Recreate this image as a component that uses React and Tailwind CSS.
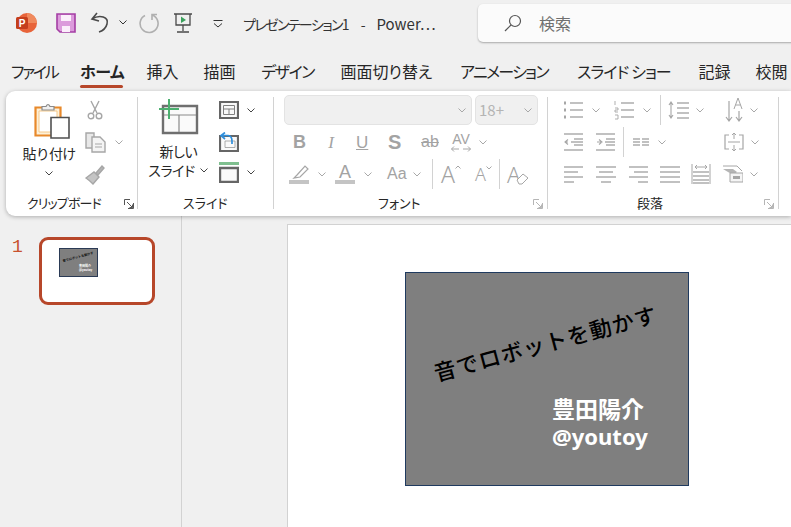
import React from 'react';

const tabs = [
    { label: 'ファイル', cls: 'ml-[11px] w-[46px] tracking-[-2.2px]' },
    { label: 'ホーム', cls: 'ml-[23px] w-[43px] font-bold tracking-[-0.5px]', active: true },
    { label: '挿入', cls: 'ml-[23px] w-[33px]' },
    { label: '描画', cls: 'ml-[24px] w-[33px]' },
    { label: 'デザイン', cls: 'ml-[25px] w-[53px] tracking-[-1.5px]' },
    { label: '画面切り替え', cls: 'ml-[26px] w-[93px]' },
    { label: 'アニメーション', cls: 'ml-[27px] w-[88px] tracking-[-1.7px]' },
    { label: 'スライド ショー', cls: 'ml-[29px] w-[92px] tracking-[-0.9px]' },
    { label: '記録', cls: 'ml-[29px] w-[33px]' },
    { label: '校閲', cls: 'ml-[24px] w-[33px]' },
];

// small chevron used all over the ribbon
const Chev = ({ className = '', color = '#a8a8a8' }) => (
    <svg width="8" height="5" viewBox="0 0 8 5" className={`shrink-0 ${className}`} fill="none" stroke={color} strokeWidth="1">
        <path d="M0.5 0.5 L4 4 L7.5 0.5" />
    </svg>
);

const Launcher = ({ color = '#b5b5b5', className = '' }) => (
    <svg width="10" height="10" viewBox="0 0 10 10" className={className} fill="none" stroke={color} strokeWidth="1">
        <path d="M9.5 4 V9.5 H4 M0.5 6 V0.5 H6 M3 3 L8.5 8.5 M8.5 5.5 V8.5 H5.5" />
    </svg>
);

const Icon = ({ w = 20, h = 20, className = '', children, stroke = '#a6a6a6' }) => (
    <svg width={w} height={h} viewBox={`0 0 ${w} ${h}`} className={`shrink-0 ${className}`} fill="none" stroke={stroke} strokeWidth="1.4">
        {children}
    </svg>
);

const Lines = ({ rows, x1 = 0, x2 = 20 }) => rows.map((y, i) => <path key={i} d={`M${Array.isArray(x1) ? x1[i] : x1} ${y} H${Array.isArray(x2) ? x2[i] : x2}`} />);

const Sep = ({ className = '' }) => <div className={`w-px bg-[#d2d2d2] shrink-0 ${className}`}></div>;

const GroupLabel = ({ children, className = '' }) => (
    <div className={`absolute bottom-[4px] text-[13px] leading-[18px] text-[#262626] whitespace-nowrap ${className}`}>{children}</div>
);

const Clipboard = () => (
    <div className="relative w-[131px] h-full flex shrink-0">
        <div className="ml-[16px] w-[54px] flex flex-col items-center pt-[11px]">
            <svg width="36" height="37" viewBox="0 0 36 37" fill="none" className="ml-[6px]">
                <path d="M1.5 5.5 H26.5 V33.5 H1.5 Z" fill="#fdf0d8" stroke="#e8892b" strokeWidth="2.2" />
                <path d="M5 9 H23 V30 H5 Z" fill="#ffffff" stroke="#f6c98a" strokeWidth="1" />
                <path d="M8 8 V4.5 H12 Q14 0.5 16 4.5 H20 V8 Z" fill="#f0f0f0" stroke="#8a8a8a" strokeWidth="1.2" />
                <path d="M17 15.5 H35 V36 H17 Z" fill="#ffffff" stroke="#505050" strokeWidth="1.6" />
            </svg>
            <div className="mt-[5px] text-[14px] leading-[18px] text-[#262626] whitespace-nowrap tracking-[-0.7px]">貼り付け</div>
            <Chev color="#444" className="mt-[9px]" />
        </div>
        <div className="ml-[9px] flex flex-col pt-[9px]">
            <Icon w={20} h={21}>
                <path d="M6 1 L12 13 M14 1 L8 13" />
                <circle cx="6" cy="16" r="2.8" />
                <circle cx="14" cy="16" r="2.8" />
            </Icon>
            <div className="mt-[11px] flex items-center">
                <Icon w={21} h={21}>
                    <path d="M1 1 H9 V16 H1 Z" fill="#e8e8e8" />
                    <path d="M7 5 H15 L20 10 V20 H7 Z" fill="#f4f4f4" />
                    <path d="M10 12 H17 M10 15 H17" strokeWidth="1" />
                </Icon>
                <Chev className="ml-[9px]" />
            </div>
            <Icon w={20} h={20} className="mt-[12px]" stroke="#a6a6a6">
                <path d="M11 8 L17 1 L19 3 L13 10 Z" fill="#b5b5b5" />
                <path d="M1 13 L9 7 L14 12 L8 19 Q4 15 1 13 Z" fill="#c4c4c4" />
            </Icon>
        </div>
        <GroupLabel className="left-[21px] [font-feature-settings:'palt'] tracking-[-0.9px]">クリップボード</GroupLabel>
        <Launcher color="#555" className="absolute right-[3px] bottom-[7px]" />
    </div>
);

const SlidesGroup = () => (
    <div className="relative w-[135px] h-full flex shrink-0">
        <div className="w-[80px] flex flex-col items-center pt-[8px]">
            <svg width="40" height="36" viewBox="0 0 40 36" fill="none" className="ml-[1px]">
                <path d="M4 7 H38 V34 H4 Z" fill="#fafafa" stroke="#6f6f6f" strokeWidth="2.4" />
                <path d="M20 16 V33 M20 16 H37 M5 16 H20" stroke="#8a8a8a" strokeWidth="1.2" />
                <path d="M10 0 V20 M0 10 H20" stroke="#4cb070" strokeWidth="2" />
            </svg>
            <div className="mt-[7px] ml-[1px] text-[14px] leading-[19px] text-[#262626] [font-feature-settings:'palt'] tracking-[-0.4px]">新しい</div>
            <div className="flex items-center text-[14px] leading-[19px] text-[#262626] [font-feature-settings:'palt'] whitespace-nowrap tracking-[-0.4px]">
                スライド<Chev color="#444" className="ml-[5px]" />
            </div>
        </div>
        <div className="ml-[1px] flex flex-col pt-[9px]">
            <div className="flex items-center h-[20px]">
                <Icon w={20} h={18} stroke="#666">
                    <path d="M1 1 H19 V17 H1 Z" fill="#fafafa" strokeWidth="2.2" />
                    <path d="M4.5 4.5 H15.5 V13.5 H4.5 Z M4.5 8 H15.5 M10 8 V13.5" strokeWidth="1" stroke="#808080" />
                </Icon>
                <Chev color="#444" className="ml-[8px]" />
            </div>
            <div className="flex items-center h-[20px] mt-[12px]">
                <Icon w={20} h={20} stroke="#666">
                    <path d="M1 4 H19 V19 H1 Z" fill="#fafafa" strokeWidth="2.2" />
                    <path d="M6 9 H16 M6 9 V15.5 H16 V9" strokeWidth="0.8" stroke="#999" />
                    <path d="M6 7 L2 3.5 L6 0.5 M2 3.5 H9 Q13 4 13 9 V12" stroke="#2f8fdc" strokeWidth="1.7" />
                </Icon>
            </div>
            <div className="flex items-center h-[21px] mt-[10px]">
                <Icon w={20} h={21} stroke="#666">
                    <path d="M0 1.5 H20" stroke="#7fbf8f" strokeWidth="3" />
                    <path d="M1 6 H19 V20 H1 Z" fill="#fafafa" strokeWidth="2.4" />
                </Icon>
                <Chev color="#444" className="ml-[8px]" />
            </div>
        </div>
        <GroupLabel className="left-[45px] [font-feature-settings:'palt']">スライド</GroupLabel>
    </div>
);

const FontGroup = () => (
    <div className="relative w-[273px] h-full flex flex-col shrink-0 pl-[10px]">
        <div className="flex mt-[4px] gap-[3px]">
            <div className="w-[188px] h-[30px] bg-[#f0f0f0] border border-[#e3e3e3] rounded-[5px] flex items-center justify-end pr-[5px]">
                <Chev />
            </div>
            <div className="w-[63px] h-[30px] bg-[#f0f0f0] border border-[#e3e3e3] rounded-[5px] flex items-center justify-between pl-[3px] pr-[5px] text-[15px] text-[#b4b4b4]">
                18+<Chev />
            </div>
        </div>
        <div className="flex items-center h-[24px] mt-[5px] text-[#a3a3a3]">
            <span className="ml-[9px] w-[12px] text-center text-[18px] leading-none font-bold font-['Liberation_Sans',sans-serif]">B</span>
            <span className="ml-[20px] w-[12px] text-center text-[17px] leading-none italic font-['Liberation_Serif',serif]">I</span>
            <span className="ml-[19px] w-[12px] text-center text-[17px] leading-none underline font-['Liberation_Sans',sans-serif]">U</span>
            <span className="ml-[20px] w-[12px] text-center text-[20px] leading-none font-bold font-['Liberation_Sans',sans-serif]">S</span>
            <span className="ml-[19px] w-[22px] text-center text-[16px] leading-none line-through font-['Liberation_Sans',sans-serif]">ab</span>
            <div className="ml-[10px] w-[20px] flex flex-col items-center leading-none">
                <span className="text-[14px] leading-[13px] font-['Liberation_Sans',sans-serif]">AV</span>
                <svg width="20" height="6" viewBox="0 0 20 6" fill="none" stroke="#a6a6a6"><path d="M3 0.5 L0.5 3 L3 5.5 M0.5 3 H8 M17 0.5 L19.5 3 L17 5.5 M12 3 H19.5" /></svg>
            </div>
            <Chev className="ml-[8px]" />
        </div>
        <div className="flex items-center h-[26px] mt-[7px] text-[#a3a3a3]">
            <div className="w-[20px] ml-[5px] flex flex-col items-center">
                <svg width="20" height="16" viewBox="0 0 20 16" fill="none" stroke="#a6a6a6" strokeWidth="1.2"><path d="M8 11 L16 2 L19 5 L11 13 L5 14 Z" /></svg>
                <div className="w-[20px] h-[4px] bg-[#c4c4c4]"></div>
            </div>
            <Chev className="ml-[9px]" />
            <div className="w-[20px] ml-[9px] flex flex-col items-center">
                <span className="text-[18px] leading-[16px] font-['Liberation_Sans',sans-serif]">A</span>
                <div className="w-[20px] h-[4px] bg-[#c4c4c4]"></div>
            </div>
            <Chev className="ml-[9px]" />
            <span className="ml-[15px] w-[22px] text-[16px] leading-none font-['Liberation_Sans',sans-serif]">Aa</span>
            <Chev className="ml-[4px]" />
            <Sep className="ml-[11px] h-[30px]" />
            <span className="ml-[8px] w-[22px] flex items-start text-[23px] leading-none font-light font-['Noto_Sans',sans-serif]">A
                <svg width="6" height="4" viewBox="0 0 6 4" className="mt-[2px] shrink-0" fill="none" stroke="#a6a6a6"><path d="M0.5 3.5 L3 1 L5.5 3.5" /></svg>
            </span>
            <span className="ml-[12px] w-[20px] flex items-start text-[18px] leading-none font-light font-['Noto_Sans',sans-serif]">A
                <svg width="6" height="4" viewBox="0 0 6 4" className="mt-[1px] shrink-0" fill="none" stroke="#a6a6a6"><path d="M0.5 0.5 L3 3 L5.5 0.5" /></svg>
            </span>
            <Sep className="ml-[4px] h-[30px]" />
            <span className="relative ml-[7px] w-[22px] h-[22px] text-[22px] leading-[22px] font-light font-['Noto_Sans',sans-serif]">A
                <svg width="13" height="12" viewBox="0 0 13 12" className="absolute right-0 bottom-0" fill="#fff" stroke="#a6a6a6"><path d="M1 7 L7 1 L12 5 L6 11 H3 Z" /></svg>
            </span>
        </div>
        <GroupLabel className="left-[104px] [font-feature-settings:'palt']">フォント</GroupLabel>
        <Launcher className="absolute right-[4px] bottom-[7px]" />
    </div>
);

const ParagraphGroup = () => (
    <div className="relative w-[230px] h-full flex flex-col shrink-0">
        <div className="flex items-center h-[32px] mt-[3px]">
            <Icon className="ml-[15px]">
                <path d="M1 3 H3 M1 10 H3 M1 17 H3" strokeWidth="3" />
                <Lines rows={[3, 10, 17]} x1={7} />
            </Icon>
            <Chev className="ml-[9px]" />
            <Icon className="ml-[14px]">
                <path d="M1 1 V5 M1 8 H4 V10 H1 V12 H4 M1 15 H4 V19 H1" strokeWidth="0.9" />
                <Lines rows={[3, 10, 17]} x1={7} />
            </Icon>
            <Chev className="ml-[9px]" />
            <Sep className="ml-[9px] h-[30px]" />
            <Icon w={22} className="ml-[7px]">
                <path d="M3 3 V17 M1 5 L3 2 L5 5 M1 15 L3 18 L5 15" strokeWidth="1.1" />
                <Lines rows={[3, 8, 13, 18]} x1={9} x2={21} />
            </Icon>
            <Chev className="ml-[6px]" />
            <Icon h={26} className="ml-[21px]">
                <path d="M4 4 V24 M1 20 L4 24 L7 20 M14 14 V24 M11 20 L14 24 L17 20" strokeWidth="1.2" />
                <path d="M9 12 L13 1 L17 12 M10.5 8 H15.5" strokeWidth="1" />
            </Icon>
            <Chev className="ml-[5px]" />
        </div>
        <div className="flex items-center h-[30px] mt-[1px]">
            <Icon className="ml-[16px]">
                <path d="M4 10 L1 10 M4 7.5 L1 10 L4 12.5" strokeWidth="1.1" />
                <Lines rows={[2, 7, 10, 13, 18]} x1={[0, 10, 7, 10, 0]} x2={19} />
            </Icon>
            <Icon className="ml-[12px]">
                <path d="M1 10 H5 M3 7.5 L6 10 L3 12.5" strokeWidth="1.1" />
                <Lines rows={[2, 7, 10, 13, 18]} x1={[0, 10, 9, 10, 0]} x2={19} />
            </Icon>
            <Sep className="ml-[7px] h-[30px]" />
            <Icon w={16} className="ml-[9px]">
                <Lines rows={[7, 10, 13]} x1={0} x2={7} />
                <Lines rows={[7, 10, 13]} x1={9} x2={16} />
            </Icon>
            <Chev className="ml-[9px]" />
            <Icon className="ml-[58px]">
                <path d="M5 3 H1 V17 H5 M15 3 H19 V17 H15 M4 10 H16" strokeWidth="1.2" />
                <path d="M10 1 V7 M8 3 L10 1 L12 3 M10 13 V19 M8 17 L10 19 L12 17" strokeWidth="1" />
            </Icon>
            <Chev className="ml-[7px]" />
        </div>
        <div className="flex items-center h-[30px] mt-[2px]">
            <Icon className="ml-[16px]"><Lines rows={[3, 8, 13, 18]} x2={[19, 14, 19, 10]} /></Icon>
            <Icon className="ml-[12px]"><Lines rows={[3, 8, 13, 18]} x1={[0, 3, 0, 5]} x2={[20, 17, 20, 15]} /></Icon>
            <Icon className="ml-[12px]"><Lines rows={[3, 8, 13, 18]} x1={[1, 6, 1, 10]} /></Icon>
            <Icon className="ml-[12px]"><Lines rows={[3, 8, 13, 18]} /></Icon>
            <Icon className="ml-[11px]">
                <path d="M1 0 V20 M19 0 V20" strokeWidth="1" />
                <path d="M4 3 H16 M6 1 L4 3 L6 5 M14 1 L16 3 L14 5" strokeWidth="1" />
                <Lines rows={[8, 12, 16, 19]} x1={2} x2={18} />
            </Icon>
            <Icon className="ml-[12px]">
                <path d="M0 5 H10 L14 8 L10 11 Z" fill="#b5b5b5" stroke="none" />
                <path d="M0 2 H14 L19 7" strokeWidth="1" />
                <path d="M7 9 H20 V18 H7 Z" fill="#f5f5f5" strokeWidth="1" />
                <path d="M10 13.5 H17" strokeWidth="3" />
            </Icon>
            <Chev className="ml-[7px]" />
        </div>
        <GroupLabel className="left-[89px]">段落</GroupLabel>
        <Launcher className="absolute right-[4px] bottom-[7px]" />
    </div>
);

const App = () => {
    return (
        <div className="w-[791px] h-[527px] overflow-hidden bg-[#f0f0f0] flex flex-col font-['Noto_Sans_CJK_JP','Noto_Sans',sans-serif] text-[#262626]">
            {/* Title bar */}
            <div className="h-[56px] flex items-start shrink-0">
                <svg width="22" height="22" viewBox="0 0 22 22" className="ml-[15px] mt-[12px] shrink-0">
                    <circle cx="12" cy="11" r="10" fill="#e8643a" />
                    <path d="M12 1 A10 10 0 0 1 22 11 H12 Z" fill="#f08a5d" />
                    <rect x="1" y="5" width="12" height="12" rx="1.5" fill="#c43e1c" />
                    <text x="7" y="15" textAnchor="middle" fontSize="10" fontWeight="700" fill="#fff" fontFamily="Liberation Sans">P</text>
                </svg>
                <svg width="20" height="20" viewBox="0 0 20 20" className="ml-[19px] mt-[13px] shrink-0">
                    <path d="M1 1 H19 V19 H4 L1 16 Z" fill="#dc9bdc" stroke="#a43ea4" strokeWidth="1.6" />
                    <rect x="5" y="2" width="10" height="6" fill="#fbeefb" />
                    <rect x="6" y="13" width="8" height="6" fill="#fbeefb" />
                </svg>
                <svg width="20" height="21" viewBox="0 0 20 21" className="ml-[14px] mt-[12px] shrink-0" fill="none" stroke="#4a4a4a" strokeWidth="1.6">
                    <path d="M7 1 L2 7 L9 9 M2 7 C10 2 19 5 17 12 C16 16 12 19 9 20" />
                </svg>
                <Chev color="#333" className="ml-[9px] mt-[20px]" />
                <svg width="21" height="21" viewBox="0 0 21 21" className="ml-[11px] mt-[13px] shrink-0" fill="none" stroke="#b0b0b0" strokeWidth="1.6">
                    <path d="M14 2 A9 9 0 1 1 7 2.5 M14 7 V1.5 H19" />
                </svg>
                <svg width="20" height="20" viewBox="0 0 20 20" className="ml-[14px] mt-[13px] shrink-0" fill="none" stroke="#4a4a4a" strokeWidth="1.3">
                    <path d="M1 1 H19 M3 1 V12 H17 V1 M10 12 V18 M4 19 H16" />
                    <path d="M8 3.5 L13 7 L8 10 Z" fill="#3aa15c" stroke="none" />
                </svg>
                <svg width="10" height="8" viewBox="0 0 10 8" className="ml-[20px] mt-[20px] shrink-0" fill="none" stroke="#333">
                    <path d="M0.5 0.5 H9.5 M1 3.5 L5 7 L9 3.5" />
                </svg>
                <div className="ml-[20px] mt-[14px] w-[212px] text-[14px] leading-[20px] whitespace-nowrap [font-feature-settings:'palt'] text-[#333]">
                    <span className="tracking-[-1.6px]">プレゼンテーション</span>1<span className="ml-[11px]">-</span><span className="ml-[11px] text-[15px]">Power…</span>
                </div>
                <div className="ml-[23px] mt-[4px] flex-1 -mr-[10px] h-[38px] bg-[#fbfbfb] rounded-[5px] shadow-[0_1px_2px_rgba(0,0,0,0.3)] flex items-center">
                    <svg width="18" height="18" viewBox="0 0 18 18" className="ml-[26px]" fill="none" stroke="#555" strokeWidth="1.2">
                        <circle cx="11" cy="7" r="5.5" />
                        <path d="M7 11 L1 17" />
                    </svg>
                    <span className="ml-[17px] text-[16px] text-[#707070]">検索</span>
                </div>
            </div>

            {/* Tabs */}
            <div className="h-[35px] flex items-start shrink-0 text-[16px] leading-[31px] [font-feature-settings:'palt']">
                {tabs.map((tab) => (
                    <div key={tab.label} className={`relative h-[32px] shrink-0 whitespace-nowrap text-center ${tab.cls}`}>
                        {tab.label}
                        {tab.active && <div className="absolute left-0 right-0 bottom-0 h-[3px] rounded-full bg-[#b7472a]"></div>}
                    </div>
                ))}
            </div>

            {/* Ribbon */}
            <div className="ml-[6px] h-[125px] bg-white rounded-l-[9px] shadow-[0_1px_4px_rgba(0,0,0,0.28)] flex shrink-0 relative">
                <Clipboard />
                <Sep className="h-[112px] mt-[6px]" />
                <SlidesGroup />
                <Sep className="h-[112px] mt-[6px]" />
                <FontGroup />
                <Sep className="h-[112px] mt-[6px]" />
                <ParagraphGroup />
                <Sep className="h-[112px] mt-[6px]" />
            </div>

            {/* Thumbnails + canvas */}
            <div className="flex flex-1 min-h-0">
                <div className="w-[182px] border-r border-[#d2d2d2] shrink-0 flex items-start pt-[21px]">
                    <span className="w-[11px] ml-[12px] text-[18px] leading-[20px] text-[#c8512d] font-['Liberation_Mono',monospace]">1</span>
                    <div className="ml-[16px] w-[116px] h-[68px] bg-white border-[3px] border-[#b7472a] rounded-[9px] pl-[17px] pt-[8px]">
                        <div className="relative w-[39px] h-[29px] bg-[#7f7f7f] border border-[#2a3a55] overflow-hidden">
                            <div className="absolute left-[2px] top-[6px] -rotate-[15deg] text-[3.2px] leading-none font-bold text-[#111] whitespace-nowrap">音でロボットを動かす</div>
                            <div className="absolute left-[19px] top-[15px] text-[3px] leading-[4px] font-bold text-white whitespace-nowrap">豊田陽介<br />@youtoy</div>
                        </div>
                    </div>
                </div>
                <div className="flex-1 pl-[105px] pt-[8px] min-w-0">
                    <div className="h-full bg-white border-l border-t border-[#d2d2d2] pl-[117px] pt-[47px]">
                        <div className="relative w-[284px] h-[214px] bg-[#7f7f7f] border border-[#1f3a5f]">
                            <div className="absolute left-[24px] top-[54px] -rotate-[15deg] text-[22px] leading-[30px] font-medium text-black whitespace-nowrap tracking-[1px]">音でロボットを動かす</div>
                            <div className="absolute left-[146px] top-[121px] font-bold text-white whitespace-nowrap">
                                <div className="text-[23px] leading-[29px]">豊田陽介</div>
                                <div className="font-['Noto_Sans',sans-serif] text-[22px] leading-[26px]">@youtoy</div>
                            </div>
                        </div>
                    </div>
                </div>
            </div>
        </div>
    );
};

export default App;
